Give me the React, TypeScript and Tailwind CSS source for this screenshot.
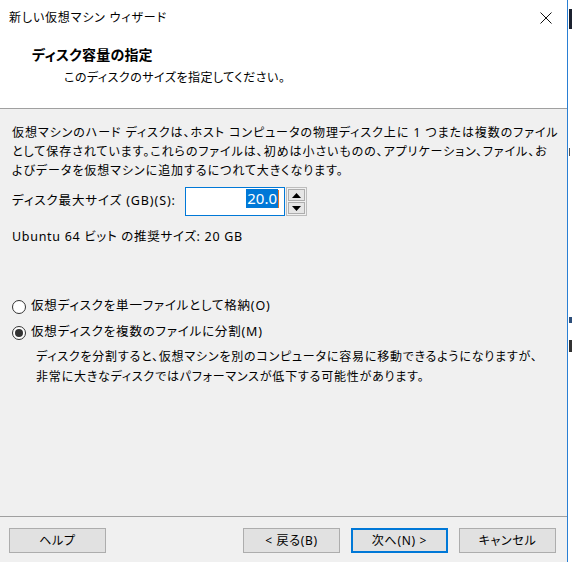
import React from "react";

const jp = "font-['Noto_Sans','Noto_Sans_CJK_JP',sans-serif] [font-feature-settings:'palt']";

function Radio({ checked }: { checked?: boolean }) {
  return (
    <span className="flex h-[14px] w-[14px] shrink-0 items-center justify-center rounded-full border border-[#333333] bg-white">
      {checked && <span className="h-[8px] w-[8px] rounded-full bg-[#333333]" />}
    </span>
  );
}

function Btn({ children, focused }: { children: React.ReactNode; focused?: boolean }) {
  return (
    <div
      className={
        "flex h-[25px] w-[97px] items-center justify-center bg-[#e1e1e1] text-[12px] tracking-[0.7px] text-black " +
        (focused ? "border-2 border-[#0078d7]" : "border border-[#adadad]")
      }
    >
      {children}
    </div>
  );
}

export default function App() {
  return (
    <div className={"flex h-[562px] w-[572px] overflow-hidden bg-white text-black " + jp}>
      <div className="flex h-full w-[568px] shrink-0 flex-col border-r border-[#2a7fd4] bg-[#f0f0f0]">
        {/* header */}
        <div className="flex h-[109px] shrink-0 flex-col border-b border-[#a0a0a0] bg-white">
          <div className="flex h-[36px] items-center justify-between pl-[9px] pr-[14px]">
            <span className="text-[12px] leading-none tracking-[0.85px]">新しい仮想マシン ウィザード</span>
            <svg width="12" height="12" viewBox="0 0 12 12" className="mr-[1px]">
              <path d="M0.5 0.5 L11.5 11.5 M11.5 0.5 L0.5 11.5" stroke="#111" strokeWidth="1" />
            </svg>
          </div>
          <div className="mt-[10px] pl-[32px] text-[14px] font-bold leading-[18px] tracking-[0.2px]">ディスク容量の指定</div>
          <div className="mt-[5px] pl-[64px] text-[12px] leading-[18px] tracking-[0.5px]">このディスクのサイズを指定してください。</div>
        </div>

        {/* body */}
        <div className="flex flex-1 flex-col px-[12px] text-[12px] tracking-[0.8px]">
          <div className="mt-[14px] leading-[19px] whitespace-nowrap tracking-[0.95px]">
            <div>仮想マシンのハード ディスクは、ホスト コンピュータの物理ディスク上に 1 つまたは複数のファイル</div>
            <div>として保存されています。これらのファイルは、初めは小さいものの、アプリケーション、ファイル、お</div>
            <div>よびデータを仮想マシンに追加するにつれて大きくなります。</div>
          </div>

          <div className="mt-[7px] flex h-[29px] items-center">
            <span className="w-[173px] text-[12.5px] tracking-[0.9px]">ディスク最大サイズ (GB)(S):</span>
            <div className="flex h-[29px] w-[100px] items-start justify-end border border-[#0078d7] bg-white pr-[5px] pt-[1px] tracking-normal">
              <span className="bg-[#0078d7] px-[1px] text-[15px] leading-[19px] text-white">20.0</span>
              <span className="mt-[1px] h-[18px] w-[1px] bg-[#e07020]" />
            </div>
            <div className="ml-[1px] flex h-[29px] w-[21px] flex-col border border-[#bdbdbd] bg-[#f0f0f0] p-[1px]">
              <div className="flex flex-1 items-center justify-center border border-[#adadad] bg-[#e6e6e6]">
                <svg width="9" height="5" viewBox="0 0 9 5"><path d="M4.5 0 L9 5 L0 5 Z" fill="#000" /></svg>
              </div>
              <div className="mt-[1px] flex flex-1 items-center justify-center border border-[#adadad] bg-[#e6e6e6]">
                <svg width="9" height="5" viewBox="0 0 9 5"><path d="M0 0 L9 0 L4.5 5 Z" fill="#000" /></svg>
              </div>
            </div>
          </div>

          <div className="mt-[11px] text-[12.5px] leading-[19px] tracking-[0.7px]">Ubuntu 64 ビット の推奨サイズ: 20 GB</div>

          <div className="mt-[51px] flex h-[19px] items-center gap-[5px]">
            <Radio />
            <span className="text-[12.5px]">仮想ディスクを単一ファイルとして格納(O)</span>
          </div>
          <div className="mt-[7px] flex h-[19px] items-center gap-[5px]">
            <Radio checked />
            <span className="text-[12.5px]">仮想ディスクを複数のファイルに分割(M)</span>
          </div>
          <div className="mt-[5px] pl-[24px] text-[12px] leading-[20px] whitespace-nowrap">
            <div>ディスクを分割すると、仮想マシンを別のコンピュータに容易に移動できるようになりますが、</div>
            <div>非常に大きなディスクではパフォーマンスが低下する可能性があります。</div>
          </div>
        </div>

        {/* footer */}
        <div className="flex h-[46px] shrink-0 flex-col border-t border-[#a0a0a0]">
          <div className="mt-[11px] flex items-center pl-[9px]">
            <Btn>ヘルプ</Btn>
            <div className="ml-[137px] flex gap-[11px]">
              <Btn>&lt; 戻る(B)</Btn>
              <Btn focused>次へ(N) &gt;</Btn>
              <Btn>キャンセル</Btn>
            </div>
          </div>
        </div>
      </div>
      {/* desktop sliver */}
      <div className="relative flex-1 bg-white">
        <div className="absolute left-[1px] top-[9px] h-[20px] w-[3px] bg-[#1c2230]" />
        <div className="absolute left-[1px] top-[148px] h-[8px] w-[1px] bg-[#555]" />
        <div className="absolute left-[1px] top-[317px] h-[6px] w-[3px] bg-[#2e4f7a]" />
        <div className="absolute left-[1px] top-[340px] h-[12px] w-[3px] bg-[#333]" />
      </div>
    </div>
  );
}
